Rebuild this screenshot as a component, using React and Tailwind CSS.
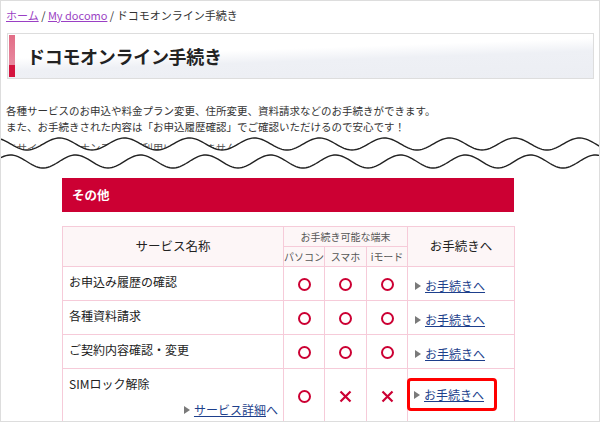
import React from 'react';

const rows = [
  { name: 'お申込み履歴の確認', marks: [true, true, true] },
  { name: '各種資料請求', marks: [true, true, true] },
  { name: 'ご契約内容確認・変更', marks: [true, true, true] },
  { name: 'SIMロック解除', marks: [true, false, false], detail: true, highlight: true },
];

// wave lines that "cut" the page
const wave = (center, amp, phase, period) => {
  const pts = [];
  for (let x = -2; x <= 602; x += 2) {
    pts.push([x, center + amp * Math.cos((2 * Math.PI * (x - phase)) / period)]);
  }
  return pts;
};
const top = wave(144, 6, 27, 65);
const bottom = wave(161.5, 6.5, 43, 65);
const toPath = (pts) => pts.map((p, i) => `${i ? 'L' : 'M'}${p[0]},${p[1].toFixed(2)}`).join(' ');
const fillPath = toPath(top) + ' ' + bottom.slice().reverse().map((p) => `L${p[0]},${p[1].toFixed(2)}`).join(' ') + ' Z';

const Circle = () => (
  <span className="inline-block w-[13px] h-[13px] rounded-full border-2 border-[#cc0033]"></span>
);

const Cross = () => (
  <svg width="13" height="13" viewBox="0 0 13 13" className="inline-block">
    <path d="M1.5 1.5 L11.5 11.5 M11.5 1.5 L1.5 11.5" stroke="#cc0033" strokeWidth="2.2" />
  </svg>
);

const Arrow = () => (
  <svg width="6" height="8" viewBox="0 0 6 8" className="inline-block mr-[4px]">
    <polygon points="0,0 6,4 0,8" fill="#7a7a7a" />
  </svg>
);

export default function App() {
  return (
    <div className="relative w-[600px] h-[422px] overflow-hidden border border-[#dddddd] bg-white font-['Noto_Sans_CJK_JP','Liberation_Sans',sans-serif] text-[#333333]">
      {/* breadcrumb */}
      <div className="pt-[7px] pl-[5px] text-[11px] leading-[14px]">
        <span className="underline text-[#9a3fc4]">ホーム</span>
        <span> / </span>
        <span className="underline text-[#9a3fc4]">My docomo</span>
        <span> / ドコモオンライン手続き</span>
      </div>

      {/* title */}
      <div className="mt-[11px] ml-[6px] w-[587px] h-[46px] border border-[#dddddd] flex items-stretch p-[1px] bg-[linear-gradient(178deg,#ffffff_38%,#eef0f5_58%,#eceef3_100%)]">
        <div className="w-[6px] flex flex-col">
          <div className="flex-1 bg-[linear-gradient(to_bottom,#e26d86,#e88aa0)]"></div>
          <div className="h-[12px] bg-[#d4143e]"></div>
        </div>
        <h1 className="pl-[12px] flex items-center text-[18px] font-bold tracking-[-0.3px] text-[#222222]">ドコモオンライン手続き</h1>
      </div>

      {/* intro */}
      <div className="mt-[24px] pl-[5px] text-[10.5px] leading-[16px] text-[#333333]">
        <p>各種サービスのお申込や料金プラン変更、住所変更、資料請求などのお手続きができます。</p>
        <p>また、お手続きされた内容は「お申込履歴確認」でご確認いただけるので安心です！</p>
        <p className="mt-[5px] text-[#555555]">※サイトメンテナンス中はご利用いただけません</p>
      </div>

      {/* その他 */}
      <div className="mt-[22px] ml-[61px] w-[452px]">
        <div className="h-[34px] bg-[#cc0033] flex items-center pl-[10px] text-white text-[12.5px] font-bold">その他</div>

        <table className="mt-[14px] w-[452px] border-collapse table-fixed">
          <colgroup>
            <col className="w-[221px]" />
            <col className="w-[41px]" />
            <col className="w-[42px]" />
            <col className="w-[41px]" />
            <col className="w-[107px]" />
          </colgroup>
          <thead>
            <tr className="h-[20px] bg-[#fdf6f7]">
              <th rowSpan={2} className="border border-[#f6cbd9] font-normal text-[12.5px] text-[#222222]">サービス名称</th>
              <th colSpan={3} className="border border-[#f6cbd9] font-normal text-[10px] text-[#555555]">お手続き可能な端末</th>
              <th rowSpan={2} className="border border-[#f6cbd9] font-normal text-[12.5px] text-[#222222]">お手続きへ</th>
            </tr>
            <tr className="h-[20px] bg-[#fdf6f7]">
              <th className="border border-[#f6cbd9] font-normal text-[10px] text-[#555555] whitespace-nowrap">パソコン</th>
              <th className="border border-[#f6cbd9] font-normal text-[10px] text-[#555555] whitespace-nowrap">スマホ</th>
              <th className="border border-[#f6cbd9] font-normal text-[10px] text-[#555555] whitespace-nowrap">iモード</th>
            </tr>
          </thead>
          <tbody>
            {rows.map((row, i) => (
              <tr key={i} className={row.detail ? 'h-[54px]' : 'h-[34px]'}>
                <td className="border border-[#f6cbd9] pl-[6px] pr-[5px] text-[12px] text-[#222222] align-top">
                  <div className="pt-[6px]">{row.name}</div>
                  {row.detail && (
                    <div className="flex justify-end items-center mt-[8px] text-[12px]">
                      <Arrow />
                      <span className="underline text-[#1d3f8c]">サービス詳細</span>
                      <span className="text-[#1d3f8c]">へ</span>
                    </div>
                  )}
                </td>
                {row.marks.map((m, j) => (
                  <td key={j} className="border border-[#f6cbd9] text-center align-middle">
                    <div className="flex justify-center items-center pt-[2px]">{m ? <Circle /> : <Cross />}</div>
                  </td>
                ))}
                <td className="border border-[#f6cbd9] align-middle">
                  <div className="flex items-center">
                    {row.highlight ? (
                      <div className="ml-[-1px] mt-[-2px] w-[90px] h-[33px] border-[3px] border-[#ff0000] rounded-[4px] flex items-center pl-[4px] text-[12px]">
                        <Arrow />
                        <span className="underline text-[#1d3f8c]">お手続きへ</span>
                      </div>
                    ) : (
                      <div className="flex items-center pl-[7px] pt-[4px] text-[12px]">
                        <Arrow />
                        <span className="underline text-[#1d3f8c]">お手続きへ</span>
                      </div>
                    )}
                  </div>
                </td>
              </tr>
            ))}
          </tbody>
        </table>
      </div>

      {/* wave cut overlay */}
      <svg width="600" height="423" viewBox="0 0 600 423" className="absolute left-[-1px] top-[-1px] pointer-events-none">
        <path d={fillPath} fill="#ffffff" />
        <path d={toPath(top)} fill="none" stroke="#222222" strokeWidth="1.4" />
        <path d={toPath(bottom)} fill="none" stroke="#222222" strokeWidth="1.4" />
      </svg>
    </div>
  );
}
